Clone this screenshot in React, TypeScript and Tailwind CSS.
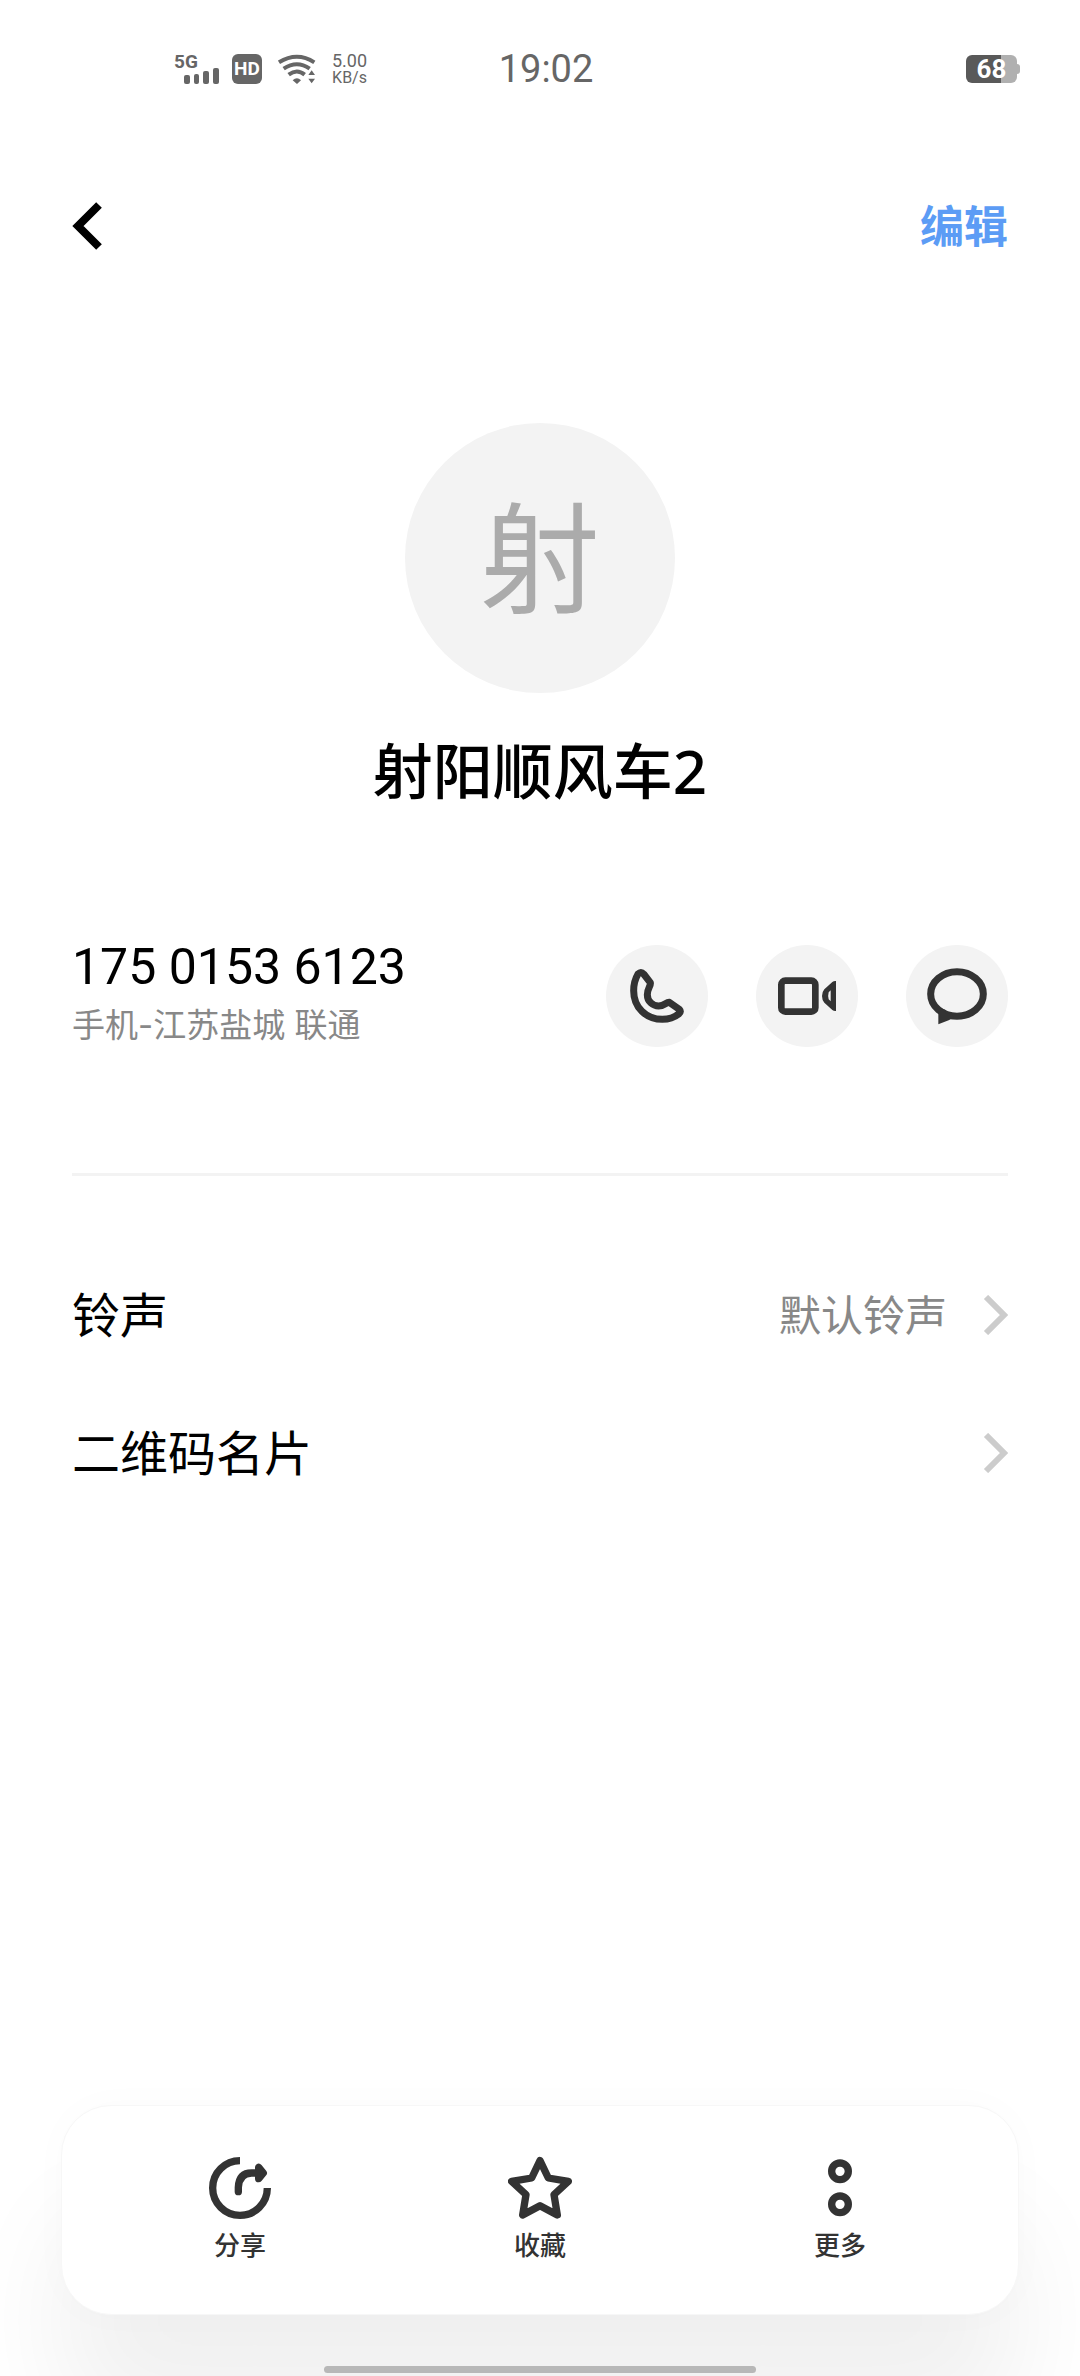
import { useState } from "react";
import type { ReactNode } from "react";

type Contact = {
  name: string;
  phone: string;
  location: string;
  ringtone: string;
};

const contact: Contact = {
  name: "射阳顺风车2",
  phone: "175 0153 6123",
  location: "手机-江苏盐城 联通",
  ringtone: "默认铃声",
};

function SignalIcon() {
  return (
    <svg width="46" height="42" viewBox="0 -6 46 42" fill="#666" aria-label="5G">
      <text x="0" y="14" fontSize="19" fontWeight="700">5G</text>
      <rect x="10" y="21" width="6" height="9" rx="2" />
      <rect x="20" y="20" width="5" height="10" rx="2" />
      <rect x="29" y="17" width="6" height="13" rx="2" />
      <rect x="39" y="14" width="6" height="16" rx="2" />
    </svg>
  );
}

function WifiIcon() {
  return (
    <svg width="38" height="30" viewBox="0 0 114 90" fill="none" stroke="#666" strokeWidth="12" aria-label="Wi-Fi">
      <path d="M3 25Q57 -8 109 25" />
      <path d="M17 44Q57 17 95 44" />
      <path d="M32 62Q57 43 80 62" />
      <path d="M44 79Q57 66 69 79L57 90Z" fill="#666" stroke="none" />
      <path d="M101 49L111 63H91ZM101 88L111 74H91Z" fill="#666" stroke="none" />
    </svg>
  );
}

function Battery() {
  return (
    <div className="flex items-center">
      <div className="flex h-[28px] w-[51px] items-center justify-center rounded-md bg-[linear-gradient(to_right,#595959_35px,#b0b0b0_35px)] text-[26px] leading-[28px] font-bold text-white">
        68
      </div>
      <div className="h-[10px] w-[3px] rounded-r-sm bg-[#b0b0b0]" />
    </div>
  );
}

function PhoneIcon() {
  return (
    <svg className="size-full" viewBox="48 45 306 306" fill="none" stroke="#333" strokeWidth="21" strokeLinejoin="round">
      <path d="M144 132Q153 123 161 132L181 158C184 166 172 174 172 194C172 214 188 228 206 228C224 228 228 216 238 217L268 238Q274 245 266 252Q246 268 217 268C168 268 131 232 131 182Q131 154 144 132Z" />
    </svg>
  );
}

function VideoIcon() {
  return (
    <svg className="size-full" viewBox="498 45 306 306">
      <rect x="574" y="152" width="102" height="93" rx="12" fill="none" stroke="#333" strokeWidth="20" />
      <path
        fill="#333"
        fillRule="evenodd"
        d="M738 153Q732 152 727 156L703 178Q696 186 696 198Q696 210 703 218L727 240Q732 244 738 243ZM722 181V214L716 208Q713 198 716 187Z"
      />
    </svg>
  );
}

function MessageIcon() {
  return (
    <svg className="size-full" viewBox="948 45 306 306">
      <ellipse cx="1101" cy="192" rx="79" ry="67" fill="none" stroke="#333" strokeWidth="21" />
      <path d="M1045 244L1056 236L1067 240V252L1084 246L1092 267Q1082 266 1076 271L1045 283Z" fill="#333" />
    </svg>
  );
}

function ShareIcon() {
  return (
    <svg className="size-16" viewBox="84 78 192 192" fill="none" stroke="#333" strokeWidth="22">
      <path d="M180 92A82 82 0 1 0 262 174" />
      <path d="M175 185V172Q177 129 215 129H236" strokeLinecap="round" />
      <path d="M236 112V146L250 129Z" fill="#333" strokeLinejoin="round" />
    </svg>
  );
}

function StarIcon() {
  return (
    <svg className="size-16" viewBox="984 78 192 192" fill="none" stroke="#333" strokeWidth="22" strokeLinejoin="round">
      <path d="M1080 92L1105 144L1165 154L1122 194L1132 255L1080 227L1028 255L1038 194L995 154L1055 144Z" />
    </svg>
  );
}

function MoreIcon() {
  return (
    <svg className="size-16" viewBox="144 78 192 192" fill="none" stroke="#333" strokeWidth="22">
      <circle cx="240" cy="124" r="25" />
      <circle cx="240" cy="223" r="25" />
    </svg>
  );
}

function RowArrow() {
  return (
    <svg width="25" height="40" viewBox="0 0 25 40" fill="none" stroke="#ccc" strokeWidth="6">
      <path d="M3 2L21 20L3 38" />
    </svg>
  );
}

function RoundButton({ label, children }: { label: string; children: ReactNode }) {
  return (
    <button aria-label={label} className="size-[102px] rounded-full bg-[#f3f3f3]">
      {children}
    </button>
  );
}

function SettingRow({ label, value }: { label: string; value?: string }) {
  return (
    <button className="flex h-[138px] w-full items-center justify-between">
      <span className="text-[48px] leading-[60px] text-black">{label}</span>
      <span className="flex items-center gap-9">
        {value && <span className="text-[42px] leading-[60px] text-[#888]">{value}</span>}
        <RowArrow />
      </span>
    </button>
  );
}

function BarButton({ label, onClick, children }: { label: string; onClick?: () => void; children: ReactNode }) {
  return (
    <button onClick={onClick} className="flex flex-col items-center gap-2">
      {children}
      <span className="text-[26px] leading-[34px] font-medium text-[#333]">{label}</span>
    </button>
  );
}

export default function App() {
  const [starred, setStarred] = useState(false);

  return (
    <main className="flex min-h-screen flex-col overflow-hidden bg-white font-['Noto_Sans','Noto_Sans_CJK_SC',sans-serif] text-black">
      {/* Status bar */}
      <div className="grid h-[138px] grid-cols-[1fr_auto_1fr] items-center font-['Roboto',sans-serif] text-[#666]">
        <div className="flex items-center gap-3 pl-[174px]">
          <SignalIcon />
          <div className="flex size-[30px] items-center justify-center rounded-md bg-[#666] text-[19px] font-bold text-white">HD</div>
          <div className="flex items-center gap-4 pl-1">
            <WifiIcon />
            <div className="text-center">
              <p className="text-[18px] leading-[17px]">5.00</p>
              <p className="text-[16px] leading-[17px]">KB/s</p>
            </div>
          </div>
        </div>
        <p className="pl-3 text-[38px] leading-[48px]">19:02</p>
        <div className="flex justify-end pr-15">
          <Battery />
        </div>
      </div>

      <header className="flex h-[176px] items-center justify-between px-[72px]">
        <button aria-label="返回">
          <svg width="32" height="48" viewBox="0 0 32 48" fill="none" stroke="#000" strokeWidth="8">
            <path d="M27 3L6 24L27 45" />
          </svg>
        </button>
        <button className="text-[44px] leading-[60px] font-bold text-[#5c9cf5]">编辑</button>
      </header>

      {/* Avatar and name */}
      <section className="flex flex-col items-center pt-[109px]">
        <div className="flex size-[270px] items-center justify-center rounded-full bg-[#f3f3f3] text-[120px] leading-[150px] text-[#ababab]">
          {contact.name[0]}
        </div>
        <h1 className="mt-9 text-[60px] leading-[84px] font-medium">{contact.name}</h1>
      </section>

      <section className="mx-[72px] mt-[125px] flex items-center justify-between border-b-3 border-[#f3f3f3] pb-[119px]">
        <div>
          <p className="font-['Roboto',sans-serif] text-[50px] leading-[58px]">{contact.phone}</p>
          <p className="font-['Inter','Noto_Sans_CJK_SC',sans-serif] text-[33px] leading-[58px] text-[#888]">{contact.location}</p>
        </div>
        <div className="flex gap-12">
          <RoundButton label="拨打电话">
            <PhoneIcon />
          </RoundButton>
          <RoundButton label="视频通话">
            <VideoIcon />
          </RoundButton>
          <RoundButton label="发送信息">
            <MessageIcon />
          </RoundButton>
        </div>
      </section>

      <section className="px-[72px] pt-[70px]">
        <SettingRow label="铃声" value={contact.ringtone} />
        <SettingRow label="二维码名片" />
      </section>

      {/* Bottom bar */}
      <footer className="mt-auto flex flex-col items-center px-[61px] pb-[3px]">
        <div className="grid w-full grid-cols-3 rounded-[50px] border border-[#f7f7f7] bg-white px-7 pt-[50px] pb-[52px] shadow-[0_110px_110px_rgba(0,0,0,0.06),0_0_40px_rgba(0,0,0,0.02)]">
          <BarButton label="分享">
            <ShareIcon />
          </BarButton>
          <BarButton label={starred ? "已收藏" : "收藏"} onClick={() => setStarred(!starred)}>
            <StarIcon />
          </BarButton>
          <BarButton label="更多">
            <MoreIcon />
          </BarButton>
        </div>
        <div className="z-10 mt-[51px] h-[7px] w-[432px] rounded-full bg-[#b8b8b8]" />
      </footer>
    </main>
  );
}
